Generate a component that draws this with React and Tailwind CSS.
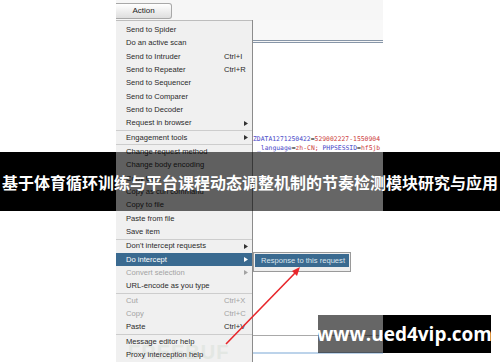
import React from "react";

const groups = [
    [
        { label: "Send to Spider" },
        { label: "Do an active scan" },
        { label: "Send to Intruder", key: "Ctrl+I" },
        { label: "Send to Repeater", key: "Ctrl+R" },
        { label: "Send to Sequencer" },
        { label: "Send to Comparer" },
        { label: "Send to Decoder" },
        { label: "Request in browser", sub: true },
    ],
    [{ label: "Engagement tools", sub: true }],
    [
        { label: "Change request method" },
        { label: "Change body encoding" },
        { label: "Copy URL" },
        { label: "Copy as curl command" },
        { label: "Copy to file" },
        { label: "Paste from file" },
        { label: "Save item" },
    ],
    [
        { label: "Don't intercept requests", sub: true },
        { label: "Do intercept", sub: true, active: true },
        { label: "Convert selection", sub: true, disabled: true },
        { label: "URL-encode as you type" },
    ],
    [
        { label: "Cut", key: "Ctrl+X", disabled: true },
        { label: "Copy", key: "Ctrl+C", disabled: true },
        { label: "Paste", key: "Ctrl+V" },
    ],
    [{ label: "Message editor help" }, { label: "Proxy interception help" }],
];

function Arrow({ color }) {
    return (
        <svg width="4" height="5" viewBox="0 0 4 5" className="ml-auto">
            <path d="M0 0 L4 2.5 L0 5 Z" fill={color} />
        </svg>
    );
}

function MenuRow({ item }) {
    const text = item.active
        ? "text-white"
        : item.disabled
        ? "text-[#a3a3a3]"
        : "text-[#2a2a2a]";

    return (
        <div className={`h-[13.35px] flex items-center pl-[10px] ${item.active ? "bg-[#3a6a90]" : ""} ${text}`}>
            <span className="flex-1 whitespace-nowrap">{item.label}</span>
            <span className="w-[28px] flex items-center pr-[4px]">
                {item.key && <span className="whitespace-nowrap">{item.key}</span>}
                {item.sub && (
                    <Arrow color={item.active ? "#ffffff" : item.disabled ? "#a3a3a3" : "#333333"} />
                )}
            </span>
        </div>
    );
}

export default function App() {
    return (
        <div className="relative w-[500px] h-[362px] bg-white overflow-hidden font-['Liberation_Sans',Arial,sans-serif]">

            {/* screenshot */}
            <div className="ml-[116px] w-[267px] h-[362px] flex flex-col bg-[#f6f6f6]">

                <div className="h-[20px] flex items-start pt-[3px]">
                    <div className="w-[56px] h-[16px] rounded-br-[3px] rounded-tr-[3px] border border-l-0 border-[#a8a8a8] bg-gradient-to-b from-white to-[#dedede] flex items-center justify-center text-[8px] text-[#222]">
                        Action
                    </div>
                </div>

                <div className="flex flex-1 min-h-0">

                    <div className="relative w-[136px] bg-[#f0f0f0] border-t border-[#bdbdbd] pt-[2px] text-[7.6px] leading-none">
                        {/* faint logo behind the menu text */}
                        <div className="absolute left-[12px] top-[321px] text-[20px] font-bold tracking-[1px] text-[#e3e7e3]">
                            FREEBUF
                        </div>
                        <div className="relative">
                            {groups.map((group, i) => (
                                <div key={i}>
                                    {i > 0 && <div className="h-[1px] bg-[#cdcdcd]" />}
                                    {group.map((item) => (
                                        <MenuRow key={item.label} item={item} />
                                    ))}
                                </div>
                            ))}
                        </div>
                    </div>

                    <div className="flex-1 border-l border-[#8c8c8c] flex flex-col">
                        <div className="h-[20px] bg-[#f8f8f8]" />
                        <div className="h-[3px] border-t border-b border-[#8796a8]" />
                        <div className="flex-1 bg-white pt-[92px] font-['DejaVu_Sans_Mono',monospace] text-[6.4px] leading-[9px] whitespace-nowrap overflow-hidden">
                            <div>
                                <span className="text-[#4747c8]">ZDATA1271250422</span>
                                <span className="text-[#555]">=</span>
                                <span className="text-[#cc3b3b]">529002227-1550904</span>
                            </div>
                            <div className="pl-[4px]">
                                <span className="text-[#4747c8]">_language</span>
                                <span className="text-[#555]">=</span>
                                <span className="text-[#cc3b3b]">zh-CN;</span>
                                <span className="text-[#4747c8]"> PHPSESSID</span>
                                <span className="text-[#555]">=</span>
                                <span className="text-[#cc3b3b]">hf5jb</span>
                            </div>
                            <div className="mt-[182px] h-[1px] bg-[#a9a9a9]" />
                            <div className="mt-[16px] h-[2px] bg-[#bcd3ea]" />
                        </div>
                    </div>

                </div>
            </div>

            {/* submenu */}
            <div className="absolute left-[253px] top-[252px] w-[98px] h-[20px] border border-[#9a9a9a] bg-[#eeeeee] p-[1px]">
                <div className="h-[13px] bg-[#3a6a90] text-[#dbe5ee] text-[7.6px] flex items-center pl-[6px]">
                    Response to this request
                </div>
            </div>

            {/* red arrow */}
            <svg className="absolute left-0 top-0" width="500" height="362" viewBox="0 0 500 362">
                <line x1="226" y1="344" x2="296" y2="272" stroke="#e8262b" strokeWidth="1.6" />
                <path d="M300 267 L292 271 L297 276 Z" fill="#e8262b" />
            </svg>

            {/* title banner */}
            <div className="absolute left-0 top-[152px] w-[500px] h-[59px] flex">
                <div className="w-[116px] bg-black" />
                <div className="w-[267px] bg-black/60" />
                <div className="flex-1 bg-black" />
            </div>
            <div className="absolute left-0 top-[152px] w-[500px] h-[59px] flex items-center justify-center text-white font-bold text-[16px] whitespace-nowrap font-['Noto_Sans_CJK_SC',sans-serif]">
                基于体育循环训练与平台课程动态调整机制的节奏检测模块研究与应用
            </div>

            {/* site badge */}
            <div className="absolute left-[318px] top-[315px] w-[173px] h-[38px] flex">
                <div className="w-[65px] bg-black/60" />
                <div className="flex-1 bg-black" />
            </div>
            <div className="absolute left-[318px] top-[315px] w-[173px] h-[38px] flex items-center justify-center text-white font-bold text-[19px] font-['Open_Sans',sans-serif]">
                www.ued4vip.com
            </div>

        </div>
    );
}
